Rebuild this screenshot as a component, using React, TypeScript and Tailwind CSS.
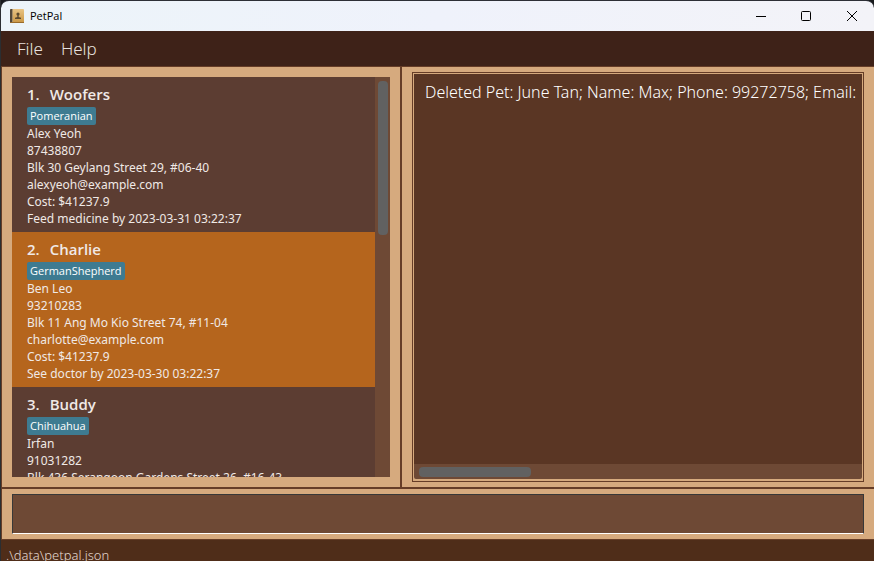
import React from "react";

type Pet = {
  name: string;
  breed: string;
  owner: string;
  phone: string;
  address: string;
  email: string;
  cost: string;
  deadline: string;
};

const pets: Pet[] = [
  {
    name: "Woofers",
    breed: "Pomeranian",
    owner: "Alex Yeoh",
    phone: "87438807",
    address: "Blk 30 Geylang Street 29, #06-40",
    email: "alexyeoh@example.com",
    cost: "Cost: $41237.9",
    deadline: "Feed medicine by 2023-03-31 03:22:37",
  },
  {
    name: "Charlie",
    breed: "GermanShepherd",
    owner: "Ben Leo",
    phone: "93210283",
    address: "Blk 11 Ang Mo Kio Street 74, #11-04",
    email: "charlotte@example.com",
    cost: "Cost: $41237.9",
    deadline: "See doctor by 2023-03-30 03:22:37",
  },
  {
    name: "Buddy",
    breed: "Chihuahua",
    owner: "Irfan",
    phone: "91031282",
    address: "Blk 436 Serangoon Gardens Street 26, #16-43",
    email: "",
    cost: "",
    deadline: "",
  },
];

function AppIcon() {
  return (
    <svg width="14" height="14" viewBox="0 0 14 14" aria-hidden="true">
      <defs>
        <linearGradient id="cover" x1="0" y1="0" x2="0" y2="1">
          <stop offset="0" stopColor="#e9c484" />
          <stop offset="1" stopColor="#c99543" />
        </linearGradient>
      </defs>
      <rect width="14" height="14" rx="1" fill="url(#cover)" />
      <path d="M0 1a1 1 0 0 1 1-1h1v14H1a1 1 0 0 1-1-1z" fill="#54493a" />
      <path d="M2 0h1v14H2z" fill="#a9906a" />
      <path d="M0 13h14v.5a.5.5 0 0 1-.5.5H.5z" fill="#9a6b2b" />
      <circle cx="8" cy="5" r="1.600" fill="#5c4a2f" />
      <path d="M7.300 6h1.400v2l2.300.7V10H5V8.700L7.300 8z" fill="#5c4a2f" />
    </svg>
  );
}

function TitleBar() {
  return (
    <header className="flex h-[31px] shrink-0 items-center rounded-t-lg border-t border-[#2d2f36] bg-linear-to-r from-[#ecf4f9] via-[#eff2fb] to-[#f3f3f8] pl-[9px] text-black">
      <AppIcon />
      <h1 className="ml-[6px] flex-1 text-[11px]">PetPal</h1>
      <button aria-label="Minimize" className="flex h-full w-[45px] items-center justify-center">
        <svg width="10" height="10" stroke="currentColor" fill="none">
          <path d="M0 5.500h10" />
        </svg>
      </button>
      <button aria-label="Maximize" className="flex h-full w-[46px] items-center justify-center">
        <svg width="10" height="10" stroke="currentColor" fill="none">
          <rect x=".5" y=".5" width="9" height="9" rx="1" />
        </svg>
      </button>
      <button aria-label="Close" className="flex h-full w-[45px] items-center justify-center">
        <svg width="10" height="10" stroke="currentColor" fill="none">
          <path d="M0 0l10 10M10 0L0 10" />
        </svg>
      </button>
    </header>
  );
}

function PetCard({ pet, index }: { pet: Pet; index: number }) {
  const background = index % 2 === 1 ? "bg-[#b5651d]" : "bg-[#5c3d32]";
  return (
    <li className={`h-[155px] shrink-0 px-[15px] py-[5px] ${background}`}>
      <h2 className="flex h-[25px] gap-[10px] text-[15px] leading-[25px] font-semibold">
        <span>{index + 1}.</span>
        <span>{pet.name}</span>
      </h2>
      <span className="block h-[18px] w-fit rounded-xs bg-[#3e7b91] px-[3px] font-['Open_Sans',sans-serif] text-[11px] leading-[18px] text-white">
        {pet.breed}
      </span>
      <div className="font-['Noto_Sans',sans-serif] text-[12px] leading-[17px] whitespace-nowrap">
        <p>{pet.owner}</p>
        <p>{pet.phone}</p>
        <p>{pet.address}</p>
        <p>{pet.email}</p>
        <p>{pet.cost}</p>
        <p>{pet.deadline}</p>
      </div>
    </li>
  );
}

export default function App() {
  return (
    <div className="h-screen bg-[#17191c] font-['Open_Sans','Noto_Sans',sans-serif]">
      <div className="flex h-full flex-col overflow-hidden border-l border-[#2b2e31]">
        <TitleBar />
        <nav className="flex h-[36px] shrink-0 items-center gap-[18px] border-b border-[#663d27] bg-[#3e2218] pl-4 font-['Noto_Sans',sans-serif] text-[17px] font-light text-[#e8e2df]">
          <button>File</button>
          <button>Help</button>
        </nav>

        <main className="flex min-h-0 flex-1 border-l border-[#663d27] bg-[#d6aa7e]">
          <section className="flex w-[400px] shrink-0 border-r-2 border-[#663d27] p-[10px]">
            <ul className="min-w-0 flex-1 overflow-hidden bg-[#5c3d32] text-[#f0e9e6]">
              {pets.map((pet, i) => (
                <PetCard key={pet.name} pet={pet} index={i} />
              ))}
            </ul>
            <div className="w-[15px] bg-[#6e4935] px-[3px] pt-1">
              <div className="h-[154px] w-[10px] rounded-sm bg-[#616161]" />
            </div>
          </section>
          <section className="flex min-w-0 flex-1 px-[10px] py-[5px]">
            <div className="flex min-w-0 flex-1 flex-col border border-[#663d27] px-px pt-px pb-[2px]">
              <textarea
                readOnly
                wrap="off"
                aria-label="Result"
                className="min-h-0 w-full flex-1 resize-none overflow-hidden bg-[#5a3624] pt-[6px] pl-[11px] font-['Noto_Sans',sans-serif] text-[16px] leading-6 font-light text-white outline-none"
                value="Deleted Pet: June Tan; Name: Max; Phone: 99272758; Email:"
              />
              <div className="h-[15px] rounded-b-xs bg-[#6e4935] px-[5px] pt-[3px]">
                <div className="h-[10px] w-[112px] rounded-sm bg-[#616161]" />
              </div>
            </div>
          </section>
        </main>

        <div className="flex h-[52px] shrink-0 border-t-2 border-l border-[#663d27] bg-[#d6aa7e] px-[10px] py-[5px]">
          <input
            type="text"
            aria-label="Command"
            className="min-w-0 flex-1 border border-[#383838] border-b-white bg-[#6e4935] px-2 text-[16px] font-light text-white outline-none"
          />
        </div>
        <footer className="h-[22px] shrink-0 overflow-hidden border-t border-[#663d27] bg-[#4f2d19] pt-[5px] pl-[5px] font-['Noto_Sans',sans-serif] text-[13px] leading-5 font-light text-[#e3d8d0]">
          .\data\petpal.json
        </footer>
      </div>
    </div>
  );
}
